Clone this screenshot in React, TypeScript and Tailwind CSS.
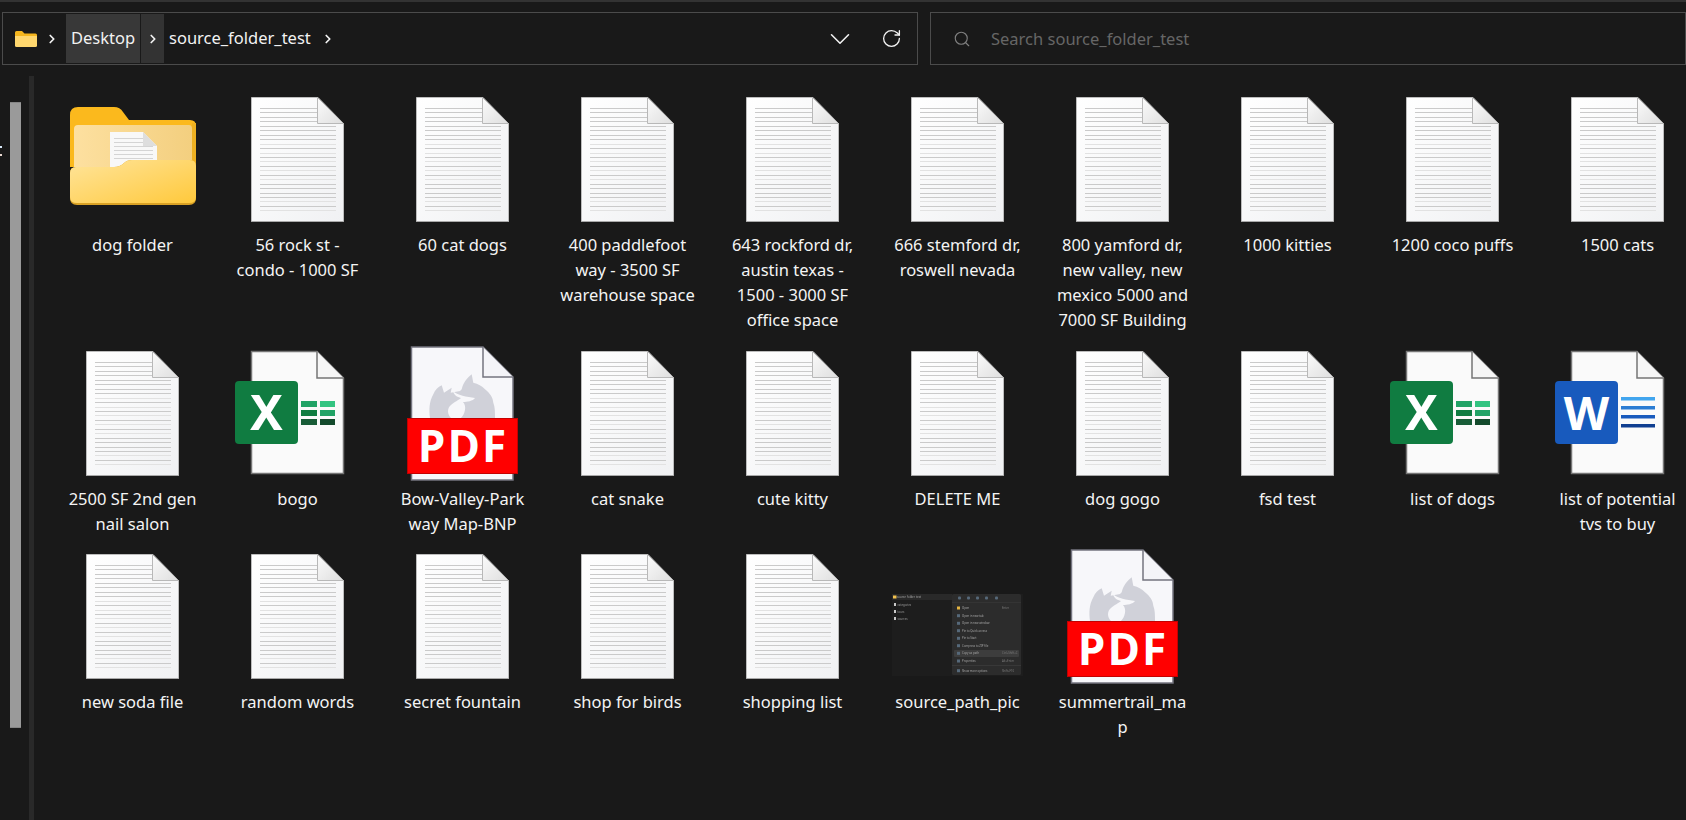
import { ChevronDown, ChevronRight, RotateCw, Search } from "lucide-react";

type Kind = "folder" | "doc" | "excel" | "word" | "pdf" | "thumb";

type Item = { kind: Kind; lines: string[] };

const items: Item[] = [
  { kind: "folder", lines: ["dog folder"] },
  { kind: "doc", lines: ["56 rock st -", "condo - 1000 SF"] },
  { kind: "doc", lines: ["60 cat dogs"] },
  { kind: "doc", lines: ["400 paddlefoot", "way - 3500 SF", "warehouse space"] },
  { kind: "doc", lines: ["643 rockford dr,", "austin texas -", "1500 - 3000 SF", "office space"] },
  { kind: "doc", lines: ["666 stemford dr,", "roswell nevada"] },
  { kind: "doc", lines: ["800 yamford dr,", "new valley, new", "mexico 5000 and", "7000 SF Building"] },
  { kind: "doc", lines: ["1000 kitties"] },
  { kind: "doc", lines: ["1200 coco puffs"] },
  { kind: "doc", lines: ["1500 cats"] },
  { kind: "doc", lines: ["2500 SF 2nd gen", "nail salon"] },
  { kind: "excel", lines: ["bogo"] },
  { kind: "pdf", lines: ["Bow-Valley-Park", "way Map-BNP"] },
  { kind: "doc", lines: ["cat snake"] },
  { kind: "doc", lines: ["cute kitty"] },
  { kind: "doc", lines: ["DELETE ME"] },
  { kind: "doc", lines: ["dog gogo"] },
  { kind: "doc", lines: ["fsd test"] },
  { kind: "excel", lines: ["list of dogs"] },
  { kind: "word", lines: ["list of potential", "tvs to buy"] },
  { kind: "doc", lines: ["new soda file"] },
  { kind: "doc", lines: ["random words"] },
  { kind: "doc", lines: ["secret fountain"] },
  { kind: "doc", lines: ["shop for birds"] },
  { kind: "doc", lines: ["shopping list"] },
  { kind: "thumb", lines: ["source_path_pic"] },
  { kind: "pdf", lines: ["summertrail_ma", "p"] },
];

// ruled lines of the text file icon, the faint ones are listed apart
const ruleCount = Array.from({ length: 24 }, (_, i) => i);
const faintRules = [8, 10, 12, 14, 16, 21, 23];

function DocIcon() {
  return (
    <svg width="93" height="125" viewBox="0 0 93 125">
      <defs>
        <linearGradient id="docFill" x1="0" y1="0" x2="1" y2="1">
          <stop offset="0" stopColor="#ffffff" />
          <stop offset="1" stopColor="#f0f1f3" />
        </linearGradient>
        <linearGradient id="docFold" x1="0" y1="0" x2="1" y2="1">
          <stop offset="0" stopColor="#fbfbfb" />
          <stop offset="1" stopColor="#dedede" />
        </linearGradient>
      </defs>
      <path d="M0.5 0.5H67L92.5 26.5V124.5H0.5Z" fill="url(#docFill)" stroke="#bdbdbd" />
      <path d="M0 124H93V125H0Z" fill="#a9a9a9" />
      {ruleCount.map((i) => (
        <rect
          key={i}
          x="9"
          y={Math.round(11 + i * 4.45)}
          width={i < 4 ? 57 : 76}
          height="1"
          fill={faintRules.includes(i) ? "#e2e2e2" : "#cacaca"}
        />
      ))}
      <path d="M66.5 0.5V26.5H92.5Z" fill="url(#docFold)" stroke="#b8b8b8" />
    </svg>
  );
}

function BlankFile() {
  return (
    <>
      <path d="M0.5 0.5H66L92.5 27V122.5H0.5Z" fill="#fafafa" stroke="#757575" strokeWidth="1.5" />
      <path d="M66 0.5V27H92.5" fill="#f6f6f6" stroke="#757575" strokeWidth="1.5" />
    </>
  );
}

function ExcelIcon() {
  return (
    <svg width="93" height="125" viewBox="0 0 93 125" className="overflow-visible">
      <BlankFile />
      <rect x="-16" y="30" width="63" height="63" rx="4" fill="#107c41" />
      <text x="15.5" y="79" textAnchor="middle" fontSize="49" fontWeight="700" fill="#ffffff" fontFamily="'Noto Sans', sans-serif">
        X
      </text>
      <rect x="50" y="50" width="16" height="6" fill="#21a366" />
      <rect x="69" y="50" width="15" height="6" fill="#33c481" />
      <rect x="50" y="59" width="16" height="6" fill="#107c41" />
      <rect x="69" y="59" width="15" height="6" fill="#21a366" />
      <rect x="50" y="68" width="16" height="6" fill="#185c37" />
      <rect x="69" y="68" width="15" height="6" fill="#134a2c" />
    </svg>
  );
}

function WordIcon() {
  return (
    <svg width="93" height="125" viewBox="0 0 93 125" className="overflow-visible">
      <BlankFile />
      <rect x="-16" y="30" width="63" height="63" rx="4" fill="#185abd" />
      <text x="15.5" y="79" textAnchor="middle" fontSize="47" fontWeight="700" fill="#ffffff" fontFamily="'Noto Sans', sans-serif">
        W
      </text>
      <rect x="50" y="46" width="34" height="3.5" fill="#41a5ee" />
      <rect x="50" y="55" width="34" height="3.5" fill="#2b7cd3" />
      <rect x="50" y="64" width="34" height="3.5" fill="#185abd" />
      <rect x="50" y="73" width="34" height="3.5" fill="#103f91" />
    </svg>
  );
}

function PdfIcon() {
  return (
    <svg width="111" height="135" viewBox="0 0 111 135">
      <path d="M4.5 1H76L106 31V134H4.5Z" fill="#f7f7fa" stroke="#74747f" strokeWidth="1.5" />
      <path d="M76 1V31H106" fill="#f4f4f8" stroke="#74747f" strokeWidth="1.5" />
      <path
        d="M23 72C22 64 22 56 26.3 48.3C28 44 31 41 34.7 39.3L37 46.7L44.7 41.7L43.7 46.7L53 45L54.7 43.3C56 37 60 32 64.7 28.3L66.3 36.7C71 38 75 40 78 43.3C83 47 86 52 86.3 56.7C88 61 88 66 88 72Z"
        fill="#d0d1d9"
      />
      <path
        d="M46 45C50 49 60 51 68 52C66 55 60 56 56 56C60 60 58 68 54 72H44C40 68 40 62 44 59C47 56 52 54 54 52C50 51 47 49 46 45Z"
        fill="#f7f7fa"
      />
      <rect x="0.5" y="72.5" width="110" height="55" fill="#ff0000" stroke="#c40000" />
      <text
        x="56"
        y="116"
        textAnchor="middle"
        fontSize="44"
        fontWeight="700"
        letterSpacing="2"
        fill="#ffffff"
        fontFamily="'Open Sans', sans-serif"
      >
        PDF
      </text>
    </svg>
  );
}

function FolderIcon() {
  return (
    <svg width="126" height="98" viewBox="0 0 126 98" className="mb-[7px]">
      <defs>
        <linearGradient id="folderFront" x1="0" y1="0" x2="1" y2="1">
          <stop offset="0" stopColor="#ffe49a" />
          <stop offset="1" stopColor="#ffc93c" />
        </linearGradient>
        <linearGradient id="folderInner" x1="0" y1="0" x2="1" y2="0">
          <stop offset="0" stopColor="#fde0a0" />
          <stop offset="1" stopColor="#f3cf7f" />
        </linearGradient>
      </defs>
      <path d="M0 8Q0 0 8 0H44Q50 0 53 5L59 13H120Q126 13 126 19V60H0Z" fill="#fbb91d" />
      <path d="M122 16H126V60H122Z" fill="#edb021" />
      <path d="M4 22Q4 18 8 18H119Q122 18 122 22V60H4Z" fill="url(#folderInner)" />
      <path d="M40 25H73L87 39V62H40Z" fill="#f8f8f8" />
      {[31, 35, 39, 43, 47, 51].map((y) => (
        <rect key={y} x="44" y={y} width={y < 39 ? 29 : 39} height="1" fill="#d4d4d4" />
      ))}
      <path d="M73 25V39H87Z" fill="#dedede" />
      <path d="M0 91V66Q0 60 6 60H44Q50 60 54 56Q57 53 62 53H120Q126 53 126 59V91Q126 98 119 98H7Q0 98 0 91Z" fill="#d9a125" />
      <path d="M0 90V66Q0 60 6 60H44Q50 60 54 56Q57 53 62 53H120Q126 53 126 59V90Q126 96 119 96H7Q0 96 0 90Z" fill="url(#folderFront)" />
    </svg>
  );
}

const menuRows: [string, number, string][] = [
  ["Open", 14, "Enter"],
  ["Open in new tab", 21.7, ""],
  ["Open in new window", 29.3, ""],
  ["Pin to Quick access", 36.7, ""],
  ["Pin to Start", 44.3, ""],
  ["Compress to ZIP file", 51.7, ""],
  ["Copy as path", 59.3, "Ctrl+Shift+C"],
  ["Properties", 67, "Alt+Enter"],
  ["Show more options", 76.7, "Shift+F10"],
];

const sideRows: [string, number][] = [
  ["categories", 11.5],
  ["tours", 18.5],
  ["sources", 25.5],
];

function ThumbIcon() {
  return (
    <svg
      width="131"
      height="85"
      viewBox="0 0 131 85"
      className="self-end mb-[10px] blur-[0.3px]"
      fontFamily="'Noto Sans', sans-serif"
      fontSize="2.8"
    >
      <rect width="131" height="82" fill="#1d1d1d" />
      <rect x="0" y="0" width="60" height="6" fill="#292929" />
      <rect x="1" y="1.5" width="3.5" height="3" fill="#f2c14e" />
      <text x="5" y="4" fill="#a8a8a8">source_folder_test</text>
      {sideRows.map(([label, y]) => (
        <g key={label}>
          <rect x="2" y={y - 2.5} width="2" height="3" fill="#c9c9c9" />
          <text x="5.5" y={y} fill="#9c9c9c">{label}</text>
        </g>
      ))}
      <rect x="60" y="0" width="69" height="81" rx="1.5" fill="#2c2c2c" />
      {[66, 75, 84, 93, 103].map((x) => (
        <rect key={x} x={x} y="2.5" width="3" height="3" rx="1" fill="#56697a" />
      ))}
      <rect x="60" y="8" width="69" height="0.5" fill="#3d3d3d" />
      <rect x="62" y="56" width="65" height="7" rx="1" fill="#3d3d3d" />
      <rect x="60" y="71.5" width="69" height="0.5" fill="#444444" />
      {menuRows.map(([label, y, hint], i) => (
        <g key={label}>
          <rect x="65" y={y - 1.5} width="3" height="3" fill={i === 0 ? "#e3b341" : "#56697a"} />
          <text x="70" y={y + 1} fill="#a8a8a8">{label}</text>
          {hint && <text x="110" y={y + 1} fill="#7c7c7c">{hint}</text>}
        </g>
      ))}
    </svg>
  );
}

function FileGlyph({ kind }: { kind: Kind }) {
  if (kind === "folder") return <FolderIcon />;
  if (kind === "excel") return <ExcelIcon />;
  if (kind === "word") return <WordIcon />;
  if (kind === "pdf") return <PdfIcon />;
  if (kind === "thumb") return <ThumbIcon />;
  return <DocIcon />;
}

function FileTile({ item }: { item: Item }) {
  return (
    <div className="flex flex-col items-center w-[165px]">
      <div className="flex justify-center items-center h-[145px] w-full">
        <FileGlyph kind={item.kind} />
      </div>
      <div className="text-center text-[16.5px] leading-[25px] text-[#f4f4f4] whitespace-nowrap">
        {item.lines.map((line) => (
          <div key={line}>{line}</div>
        ))}
      </div>
    </div>
  );
}

function PathBar() {
  return (
    <div className="flex items-stretch h-[53px] w-[916px] border border-[#4b4b4b] text-[#f2f2f2] text-[16.5px] p-[1px]">
      <div className="flex items-center pl-[11px] w-[62px]">
        <svg width="22" height="16" viewBox="0 0 22 16">
          <path d="M0 1.5Q0 0 1.5 0H7L9.5 2.5H20.5Q22 2.5 22 4V8H0Z" fill="#f5b61e" />
          <path d="M0 5H22V14.5Q22 16 20.5 16H1.5Q0 16 0 14.5Z" fill="#ffd76e" />
        </svg>
        <ChevronRight size={14} strokeWidth={3} className="ml-[8px]" />
      </div>
      <div className="flex items-center justify-center w-[74px] bg-[#383838]">Desktop</div>
      <div className="flex items-center justify-center w-[23px] ml-[1px] bg-[#333333]">
        <ChevronRight size={14} strokeWidth={3} />
      </div>
      <div className="flex items-center ml-[5px]">source_folder_test</div>
      <div className="flex items-center ml-[10px]">
        <ChevronRight size={14} strokeWidth={3} />
      </div>
      <div className="flex items-center ml-auto pr-[14px] gap-[24px]">
        <ChevronDown size={34} strokeWidth={1.1} />
        <RotateCw size={21} strokeWidth={1.5} />
      </div>
    </div>
  );
}

export default function App() {
  return (
    <div className="h-[820px] w-[1686px] overflow-hidden bg-[#191919] flex flex-col font-['Noto_Sans',sans-serif]">
      <div className="h-[2px] bg-[#333333]" />
      <div className="flex gap-[12px] pl-[2px] mt-[10px]">
        <PathBar />
        <div className="flex-1 flex items-center h-[53px] border border-[#4b4b4b] pl-[22px] text-[16.5px] text-[#666666]">
          <Search size={18} strokeWidth={1.5} className="text-[#808080]" />
          <span className="ml-[20px] pt-[1px]">Search source_folder_test</span>
        </div>
      </div>
      <div className="flex flex-1 min-h-0 mt-[11px]">
        <div className="flex w-[50px] flex-none">
          <div className="w-[10px] flex flex-col gap-[6px] pt-[70px]">
            <div className="w-[2px] h-[2px] bg-[#d8e8f8]" />
            <div className="w-[2px] h-[2px] bg-[#e8d8d0]" />
          </div>
          <div className="w-[11px] h-[626px] mt-[26px] bg-[#9a9a9a] border-t border-b border-[#858585]" />
          <div className="w-[5px] ml-[8px] bg-[#292929]" />
        </div>
        <div className="grid grid-cols-[repeat(10,165px)] grid-rows-[254px_203px_auto] content-start pt-[11px] flex-none">
          {items.map((item) => (
            <FileTile key={item.lines.join(" ")} item={item} />
          ))}
        </div>
      </div>
    </div>
  );
}
